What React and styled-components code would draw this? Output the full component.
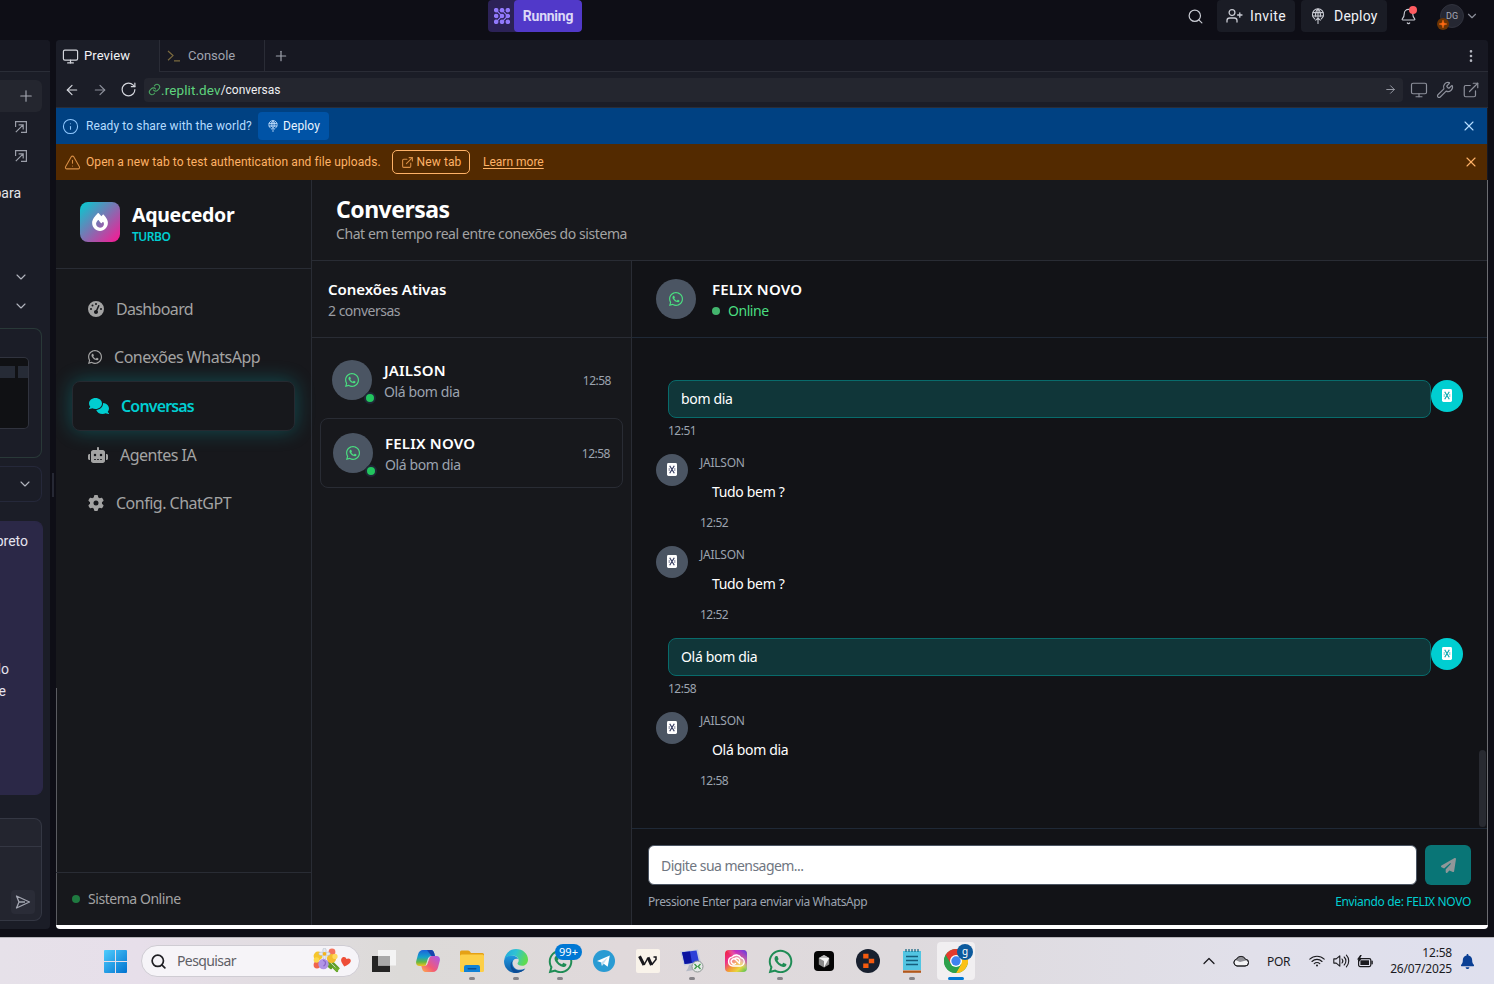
import React from "react";
import styled, { createGlobalStyle, css } from "styled-components";
import {
  Monitor, Plus, ArrowLeft, ArrowRight, RotateCw, Info, TriangleAlert, ExternalLink, X,
  Search, Bell, ChevronDown, ChevronUp, EllipsisVertical, Wrench,
} from "lucide-react";
import { FaComments, FaRobot, FaGear, FaGaugeHigh, FaFire, FaPaperPlane, FaBell } from "react-icons/fa6";
import { FaWhatsapp } from "react-icons/fa";

const segoe = `"Noto Sans", "Open Sans", sans-serif`;
const plex = `Roboto, "Liberation Sans", sans-serif`;

const GlobalStyle = createGlobalStyle`
  * { box-sizing: border-box; }
  body { margin: 0; background: #0e0e16; overflow: hidden; }
  svg { display: block; flex: none; }
`;

const Screen = styled.div`
  width: 1494px;
  height: 984px;
  display: flex;
  flex-direction: column;
  background: #0e0e16;
  overflow: hidden;
  font-family: ${plex};
`;

const Text = styled.span`
  font-family: ${(p) => (p.$ui ? plex : segoe)};
  font-size: ${(p) => p.$size}px;
  line-height: ${(p) => p.$lh || 20}px;
  font-weight: ${(p) => p.$weight || 400};
  color: ${(p) => p.$color || "#fff"};
  letter-spacing: ${(p) => p.$ls || 0}px;
  white-space: nowrap;
`;

/* top bar */
const TopBar = styled.header`
  height: 40px;
  flex: none;
  display: flex;
  align-items: flex-start;
  padding-left: 488px;
`;
const RunPill = styled.div`
  display: flex;
  width: 94px;
  height: 32px;
  border-radius: 4px;
  overflow: hidden;
  background: #2c2257;
`;
const RunDots = styled.div`
  width: 26px;
  display: flex;
  align-items: center;
  justify-content: center;
  padding-left: 2px;
`;
const RunLabel = styled.div`
  flex: 1;
  display: flex;
  align-items: center;
  justify-content: center;
  background: #5139c9;
  border-radius: 4px;
`;
const TopActions = styled.div`
  margin-left: auto;
  display: flex;
  align-items: center;
  height: 32px;
  padding-right: 15px;
`;
const TopButton = styled.div`
  display: flex;
  align-items: center;
  gap: ${(p) => p.$gap}px;
  width: ${(p) => p.$w}px;
  height: 32px;
  padding-left: ${(p) => p.$pl}px;
  margin-left: ${(p) => p.$ml}px;
  border-radius: 4px;
  background: #1a1c25;
`;
const BellWrap = styled.div`
  position: relative;
  margin-left: 13px;
`;
const BellDot = styled.i`
  position: absolute;
  right: 0;
  top: -2px;
  width: 8px;
  height: 8px;
  border-radius: 50%;
  background: #ff5c61;
`;
const UserBadge = styled.div`
  position: relative;
  width: 24px;
  height: 24px;
  margin: 0 1px 0 23px;
  border-radius: 50%;
  border: 1px solid #30323d;
  background: #252732;
  display: flex;
  align-items: center;
  justify-content: center;
`;
const UserSpark = styled.div`
  position: absolute;
  left: -4px;
  top: 13px;
`;

/* workspace */
const Workspace = styled.div`
  display: flex;
  height: 889px;
  flex: none;
`;
const AgentPane = styled.aside`
  width: 50px;
  display: flex;
  flex-direction: column;
  background: #1b1d27;
  border-radius: 0 4px 4px 0;
  overflow: hidden;
`;
const AgentHead = styled.div`
  height: 32px;
  flex: none;
  background: #171822;
  border-bottom: 1px solid #2a2d37;
`;
const AgentPlus = styled.div`
  width: 42px;
  height: 32px;
  margin-top: 8px;
  flex: none;
  display: flex;
  align-items: center;
  justify-content: flex-end;
  padding-right: 7px;
  border-radius: 0 6px 6px 0;
  background: #24262f;
`;
const AgentRow = styled.div`
  width: ${(p) => p.$w || 42}px;
  height: ${(p) => p.$h}px;
  margin-top: ${(p) => p.$mt || 0}px;
  flex: none;
  display: flex;
  align-items: center;
  justify-content: flex-end;
`;
const AgentCard = styled.div`
  width: ${(p) => p.$w || 42}px;
  height: ${(p) => p.$h}px;
  margin-top: ${(p) => p.$mt}px;
  flex: none;
  border: 1px solid ${(p) => p.$border};
  border-left: 0;
  border-radius: 0 8px 8px 0;
  background: ${(p) => p.$bg || "transparent"};
`;
const Snapshot = styled.div`
  width: 29px;
  height: 72px;
  margin-top: 28px;
  padding-top: 8px;
  display: flex;
  gap: 3px;
  background: #101114;
  border: 1px solid #30333e;
  border-left: 0;
  border-radius: 0 5px 5px 0;
`;
const SnapBlock = styled.div`
  height: 12px;
  width: ${(p) => p.$w}px;
  background: #262b36;
`;
const ComposerTop = styled.div`
  height: 28px;
  border-bottom: 1px solid #343743;
`;
const ComposerSend = styled.div`
  width: 24px;
  height: 24px;
  margin: 43px 0 0 11px;
  border-radius: 4px;
  background: #2a2c37;
  display: flex;
  align-items: center;
  justify-content: center;
`;
const Gutter = styled.div`
  width: 6px;
  display: flex;
  align-items: center;
  justify-content: center;
`;
const Handle = styled.div`
  width: 2px;
  height: 24px;
  background: #262834;
`;
const Pane = styled.main`
  width: 1432px;
  display: flex;
  flex-direction: column;
  border-radius: 4px;
  overflow: hidden;
  background: #171822;
`;
const Tabs = styled.div`
  height: 32px;
  flex: none;
  display: flex;
  background: linear-gradient(#2a2c36, #2a2c36) bottom / 100% 1px no-repeat #171822;
`;
const Tab = styled.div`
  display: flex;
  align-items: center;
  gap: ${(p) => p.$gap}px;
  width: ${(p) => p.$w}px;
  padding-left: ${(p) => p.$pl}px;
  height: ${(p) => (p.$active ? 32 : 31)}px;
  border-right: 1px solid #2a2c36;
  background: ${(p) => (p.$active ? "#1b1d27" : "transparent")};
`;
const TabPlus = styled.div`
  display: flex;
  align-items: center;
  padding-left: 8px;
`;
const TabMenu = styled.div`
  margin-left: auto;
  display: flex;
  align-items: center;
  padding-right: 9px;
`;
const AddressBar = styled.div`
  height: 36px;
  flex: none;
  display: flex;
  align-items: center;
  padding-left: 8px;
  background: #1b1d27;
  border-bottom: 1px solid #2a2d37;
`;
const NavIcons = styled.div`
  display: flex;
  align-items: center;
  gap: 12px;
  width: 80px;
`;
const AddressField = styled.div`
  display: flex;
  align-items: center;
  width: 1259px;
  height: 24px;
  padding: 0 6px 0 4px;
  border-radius: 4px;
  background: #24262f;
`;
const FieldGo = styled.div`
  margin-left: auto;
`;
const AddressTools = styled.div`
  display: flex;
  align-items: center;
  gap: 8px;
  padding-left: 7px;
`;
const Notice = styled.div`
  height: 36px;
  flex: none;
  display: flex;
  align-items: center;
  margin-right: 1px;
  padding: 0 ${(p) => p.$pr}px 0 ${(p) => p.$pl}px;
  background: ${(p) => p.$bg};
`;
const NoticeText = styled(Text)`
  margin-left: ${(p) => p.$ml}px;
  width: ${(p) => p.$w}px;
`;
const NoticeClose = styled.div`
  margin-left: auto;
`;
const DeployButton = styled.div`
  display: flex;
  align-items: center;
  justify-content: center;
  gap: 4px;
  width: 71px;
  height: 28px;
  border-radius: 4px;
  background: #0053a6;
`;
const NewTabButton = styled.div`
  display: flex;
  align-items: center;
  justify-content: center;
  gap: 3px;
  width: 78px;
  height: 24px;
  margin-right: 13px;
  border: 1px solid #ffb267;
  border-radius: 5px;
`;
const LearnMore = styled(Text)`
  text-decoration: underline;
  text-underline-offset: 2px;
`;

/* chat application */
const AppFrame = styled.div`
  height: 745px;
  display: flex;
  background: linear-gradient(#5b5c61, #5b5c61) 0 100% / 1px 237px no-repeat #17181c;
  border-right: 1px solid #6c6d72;
`;
const FrameFoot = styled.div`
  height: 4px;
  background: #fff;
`;
const Sidebar = styled.nav`
  width: 256px;
  display: flex;
  flex-direction: column;
  border-right: 1px solid #292c34;
`;
const Brand = styled.div`
  height: 89px;
  flex: none;
  display: flex;
  align-items: flex-start;
  gap: 12px;
  padding: 22px 0 0 24px;
  border-bottom: 1px solid #292c34;
`;
const BrandLogo = styled.div`
  width: 40px;
  height: 40px;
  border-radius: 8px;
  display: flex;
  align-items: center;
  justify-content: center;
  background: linear-gradient(135deg, #00ced1, #ff1493);
`;
const Stack = styled.div`
  display: flex;
  flex-direction: column;
  flex: ${(p) => (p.$grow ? 1 : "none")};
`;
const NavList = styled.div`
  flex: 1;
  padding: 16px;
`;
const NavItem = styled.div`
  display: flex;
  align-items: center;
  gap: ${(p) => p.$gap || 12}px;
  height: ${(p) => (p.$active ? 50 : 48)}px;
  padding-left: ${(p) => p.$pl || 16}px;
  border-radius: 8px;
  color: ${(p) => (p.$active ? "#00ced1" : "#a3a3a3")};
  ${(p) =>
    p.$active &&
    css`
      border: 1px solid #252a31;
      background: #17181c;
      box-shadow: 0 0 20px rgba(0, 206, 209, 0.3);
    `}
`;
const SideFoot = styled.div`
  height: 53px;
  flex: none;
  display: flex;
  align-items: center;
  gap: 8px;
  padding-left: 16px;
  border-top: 1px solid #292c34;
`;
const Dot = styled.i`
  width: 8px;
  height: 8px;
  border-radius: 50%;
  background: ${(p) => p.$color};
`;
const Content = styled.div`
  flex: 1;
  display: flex;
  flex-direction: column;
`;
const ContentHead = styled.div`
  height: 81px;
  flex: none;
  display: flex;
  flex-direction: column;
  padding: 13px 24px 0;
  border-bottom: 1px solid #292c34;
`;
const Columns = styled.div`
  flex: 1;
  display: flex;
  min-height: 0;
`;
const ListColumn = styled.section`
  width: 320px;
  flex: none;
  border-right: 1px solid #292c34;
`;
const ListHead = styled.div`
  height: 77px;
  display: flex;
  flex-direction: column;
  padding: 16px 16px 0;
  border-bottom: 1px solid #292c34;
`;
const ListBody = styled.div`
  display: flex;
  flex-direction: column;
  gap: 4px;
  padding: 8px;
`;
const Contact = styled.div`
  display: flex;
  align-items: center;
  gap: 12px;
  height: ${(p) => (p.$active ? 70 : 68)}px;
  padding: 0 12px;
  border-radius: 8px;
  border: ${(p) => (p.$active ? "1px solid #292c34" : "0")};
`;
const RoundIcon = styled.div`
  position: relative;
  width: ${(p) => p.$size}px;
  height: ${(p) => p.$size}px;
  flex: none;
  border-radius: 50%;
  background: ${(p) => p.$bg || "#4b5563"};
  color: ${(p) => (p.$bg ? "#0aa7b0" : "#353c60")};
  display: flex;
  align-items: center;
  justify-content: center;
`;
const Presence = styled.i`
  position: absolute;
  right: -4px;
  bottom: -4px;
  width: 12px;
  height: 12px;
  border-radius: 50%;
  border: 2px solid #1f2937;
  background: #22c55e;
`;
const ChatColumn = styled.section`
  flex: 1;
  display: flex;
  flex-direction: column;
  background: #121317;
`;
const ChatHead = styled.div`
  height: 77px;
  flex: none;
  display: flex;
  align-items: center;
  gap: 16px;
  padding-left: 24px;
  border-bottom: 1px solid #1f2937;
`;
const OnlineLine = styled.div`
  display: flex;
  align-items: center;
  gap: 8px;
`;
const ScrollArea = styled.div`
  flex: 1;
  display: flex;
  padding-right: 1px;
`;
const Messages = styled.div`
  flex: 1;
  display: flex;
  flex-direction: column;
  gap: 16px;
  padding: 42px 16px 0 24px;
`;
const ScrollThumb = styled.div`
  width: 7px;
  height: 77px;
  align-self: flex-end;
  margin-bottom: 1px;
  border-radius: 4px;
  background: #282a31;
`;
const MessageRow = styled.div`
  display: flex;
  gap: ${(p) => (p.$own ? 0 : 12)}px;
  padding-left: ${(p) => (p.$own ? 12 : 0)}px;
  height: ${(p) => (p.$own ? 58 : 76)}px;
`;
const Bubble = styled.div`
  height: 38px;
  flex: none;
  display: flex;
  align-items: center;
  padding-left: 12px;
  margin: ${(p) => (p.$own ? "0 0 5px" : "2px 0 4px")};
  border-radius: 8px;
  border: ${(p) => (p.$own ? "1px solid #086b6b" : "0")};
  background: ${(p) => (p.$own ? "#103639" : "transparent")};
`;
const Sender = styled(Text)`
  padding-top: 1px;
`;
const ContactTime = styled(Text)`
  padding-top: 2px;
`;
const Composer = styled.div`
  height: 97px;
  flex: none;
  display: flex;
  flex-direction: column;
  gap: 7px;
  padding: 16px 16px 0;
  border-top: 1px solid #1f2937;
`;
const ComposerRow = styled.div`
  display: flex;
  justify-content: space-between;
  align-items: center;
`;
const MessageInput = styled.div`
  width: 769px;
  height: 40px;
  display: flex;
  align-items: center;
  padding: 2px 0 0 12px;
  border: 1px solid #4b5563;
  border-radius: 6px;
  background: #fff;
`;
const SendButton = styled.div`
  width: 46px;
  height: 40px;
  display: flex;
  align-items: center;
  justify-content: center;
  border-radius: 6px;
  background: #097576;
`;

/* desktop taskbar */
const Taskbar = styled.footer`
  height: 47px;
  margin-top: 8px;
  flex: none;
  display: flex;
  align-items: center;
  padding-left: 104px;
  border-top: 1px solid #b5b3b9;
  background: linear-gradient(90deg, #e6e1e9 0, #e7dfea 140px, #dcdad8 400px, #e0d9db 620px, #dedadd 900px, #e1e0ea 1250px, #dfe0ee 100%);
`;
const SearchPill = styled.div`
  display: flex;
  align-items: center;
  gap: 10px;
  width: 219px;
  height: 32px;
  margin: 0 2px 0 14px;
  padding: 0 6px 0 8px;
  border-radius: 16px;
  border: 1px solid #cfccd3;
  background: #f6f4f8;
`;
const PillArt = styled.div`
  margin-left: auto;
`;
const TaskItem = styled.div`
  position: relative;
  width: 38px;
  height: 38px;
  margin: 0 3px;
  display: flex;
  align-items: center;
  justify-content: center;
  border-radius: 4px;
  background: ${(p) => (p.$open ? "#f1eff1" : "transparent")};
`;
const TaskMark = styled.i`
  position: absolute;
  bottom: 0;
  left: ${(p) => (p.$wide ? 11 : 16)}px;
  width: ${(p) => (p.$wide ? 16 : 6)}px;
  height: 3px;
  border-radius: 2px;
  background: ${(p) => (p.$wide ? "#0078d4" : "#858388")};
`;
const TaskBadge = styled.span`
  position: absolute;
  top: 2px;
  left: ${(p) => (p.$round ? 20 : 14)}px;
  width: ${(p) => (p.$round ? 16 : 27)}px;
  height: 16px;
  border-radius: 8px;
  background: ${(p) => (p.$round ? "#0c5a9d" : "#0078d4")};
  color: #fff;
  font: ${(p) => (p.$round ? 10 : 11)}px/15px ${segoe};
  text-align: center;
`;
const Tray = styled.div`
  margin-left: auto;
  display: flex;
  align-items: center;
  padding-right: 19px;
`;
const TrayItem = styled.div`
  margin-right: ${(p) => p.$mr}px;
`;
const Clock = styled.div`
  display: flex;
  flex-direction: column;
  align-items: flex-end;
  margin-right: 8px;
`;

const DeployGlyph = ({ size, color, sw = 1.1 }) => (
  <svg width={size} height={size} viewBox="0 0 16 16" fill="none" stroke={color} strokeWidth={sw} strokeLinecap="round">
    <path d="M4.600 10.800A5.600 5.600 0 1 1 11.400 10.800" />
    <path d="M5.800 8.800C4.900 5.500 6.200 2 8 1.100C9.800 2 11.100 5.500 10.200 8.800M3 4.600h10M2.800 8h10.400M8 1.200v14.200M5.700 12.200L8 10l2.300 2.200" />
  </svg>
);
const InviteGlyph = () => (
  <svg width="17" height="16" viewBox="0 0 17 16" fill="none" stroke="#c8cad2" strokeWidth="1.3" strokeLinecap="round">
    <circle cx="6" cy="4.6" r="2.9" />
    <path d="M1 14v-1.4c0-1.6 1.2-2.6 2.7-2.6h4.6c1.5 0 2.7 1 2.7 2.6V14M13.8 4.8v4.4M11.6 7h4.4" />
  </svg>
);
const RunGlyph = () => (
  <svg width="16" height="16" viewBox="0 0 16 16" fill="#9179fb" stroke="#9179fb">
    {[2.2, 8, 13.8].map((x) => [2.2, 8, 13.8].map((y) => <circle key={`${x}-${y}`} cx={x} cy={y} r="2.3" stroke="none" />))}
    <path d="M2.2 2.2L8 8L2.2 13.8M8 2.2L13.8 8L8 13.8" fill="none" strokeWidth="1.1" />
  </svg>
);
const ConsoleGlyph = () => (
  <svg width="14" height="12" viewBox="0 0 14 12" fill="none" stroke="#7b6a3f" strokeWidth="1.2">
    <path d="M1 1l5 4.6-5 4.6M7 10.8h6" />
  </svg>
);
const JumpGlyph = () => (
  <svg width="12" height="12" viewBox="0 0 12 12" fill="none" stroke="#9b9ea9" strokeWidth="1.2">
    <path d="M.6 4V.6h10.800v10.800H8M.8 11.200L7.800 4.200M3.600 3.800h4.600v4.800" />
    <path d="M.6 6V4M6 11.400h2" />
  </svg>
);
const SparkGlyph = () => (
  <svg width="12" height="12" viewBox="0 0 12 12">
    <circle cx="6" cy="6" r="6" fill="#6b3404" />
    <path d="M6 2l.9 3.1L10 6l-3.1.9L6 10l-.9-3.1L2 6l3.1-.9z" fill="#ff6a13" stroke="#ff6a13" strokeWidth=".5" />
  </svg>
);
const MissingGlyph = () => (
  <svg width="10" height="14" viewBox="0 0 10 14">
    <rect width="10" height="13" rx="1.400" fill="#fff" />
    <path d="M2.700 2.800L7.300 10.200M7.300 2.800L2.700 10.200" stroke="currentColor" strokeWidth="1.200" />
    <path d="M2.200 5v3M7.800 5v3" stroke="currentColor" strokeWidth=".6" />
  </svg>
);
const SendOutline = () => (
  <svg width="16" height="14" viewBox="0 0 16 14" fill="none" stroke="#a3a6b1" strokeWidth="1.3" strokeLinejoin="round">
    <path d="M1.5 1L14.5 7L1.5 13L4 7zM4 7h6" />
  </svg>
);

const WindowsLogo = () => (
  <svg width="23" height="23" viewBox="0 0 23 23">
    <defs>
      <linearGradient id="win" x1="0" y1="0" x2="1" y2="1">
        <stop offset="0" stopColor="#4fcdfd" />
        <stop offset="1" stopColor="#0072cf" />
      </linearGradient>
    </defs>
    <path fill="url(#win)" d="M0 1q0-1 1-1h10v11H0zM12 0h10q1 0 1 1v10H12zM0 12h11v11H1q-1 0-1-1zM12 12h11v10q0 1-1 1H12z" />
  </svg>
);
const Bouquet = () => (
  <svg width="40" height="26" viewBox="0 0 40 26">
    <path d="M15 14l9 9M17 12l8 8M13 16l5 4" stroke="#5e9c25" strokeWidth="2.4" strokeLinecap="round" />
    <path d="M19 19l8 1-3 4z" fill="#6ead2c" />
    <circle cx="19" cy="4" r="3.4" fill="#f4735d" />
    <circle cx="4" cy="17" r="3.4" fill="#f0654d" />
    <circle cx="5" cy="8" r="4.4" fill="#f6c52c" />
    <circle cx="3.5" cy="12" r="2.8" fill="#fbd84c" />
    <circle cx="18.5" cy="10.5" r="4.6" fill="#f5bc2d" />
    <circle cx="22" cy="8.4" r="2.6" fill="#ffd95d" />
    <g fill="#e5e9f0" stroke="#a9b0bf" strokeWidth=".5">
      <ellipse cx="11.5" cy="2.6" rx="1.7" ry="2.5" /><ellipse cx="11.5" cy="9" rx="1.7" ry="2.5" />
      <ellipse cx="8.2" cy="5.8" rx="2.5" ry="1.7" /><ellipse cx="14.8" cy="5.8" rx="2.5" ry="1.7" />
    </g>
    <circle cx="11.5" cy="5.8" r="1.9" fill="#f2b21f" />
    <circle cx="10.5" cy="16" r="5.2" fill="#b194e6" />
    <path d="M10 12.5c3 0 3.5 4 .5 5.6" fill="none" stroke="#8765c8" strokeWidth="1.2" />
    <path d="M28.5 10.6c1.8-2.6 4.6-1.5 4.9.5 2-1.7 5-.2 4.3 2.4-.6 2.4-3.3 3.4-6.4 5-1.6-2.6-4.2-5.4-2.8-7.9z" fill="#ee4d37" />
  </svg>
);
const TaskViewIcon = () => (
  <svg width="24" height="24" viewBox="0 0 24 24">
    <rect x="0" y="7" width="18" height="16" fill="#242424" />
    <rect x="6" y="1" width="18" height="15.5" fill="#f4f4f4" />
    <rect x="6" y="7" width="12" height="9.5" fill="#a9a9a9" />
  </svg>
);
const CopilotIcon = () => (
  <svg width="24" height="22" viewBox="0 0 24 22">
    <defs>
      <linearGradient id="cpa" x1="0" y1="0" x2="0" y2="1">
        <stop offset="0" stopColor="#1b62dc" /><stop offset=".45" stopColor="#15a3c9" /><stop offset=".75" stopColor="#67b83f" /><stop offset="1" stopColor="#f4c020" />
      </linearGradient>
      <linearGradient id="cpb" x1="0" y1="1" x2="1" y2="0">
        <stop offset="0" stopColor="#ffb14a" /><stop offset=".4" stopColor="#f25a77" /><stop offset="1" stopColor="#a958ee" />
      </linearGradient>
    </defs>
    <path d="M7 0h8c2 0 2.6 1.4 3.2 3.2L19 6h-3.5c-1.600 0-2.300.8-2.800 2.300L11 13.500c-.5 1.700-1.500 2.500-3 2.500H3.500C.8 16-.3 14 .2 11.200L2 4.500C2.800 1.600 4.500 0 7 0z" fill="url(#cpa)" />
    <path d="M17 22H9.500c-2 0-2.800-1.400-3.300-3l-.9-3H8.500c1.600 0 2.600-.9 3.100-2.500l1.700-5.200C13.800 6.800 14.700 6 16 6h4.500c2.700 0 3.800 2 3.300 4.700L22 17.500c-.8 2.900-2.500 4.500-5 4.500z" fill="url(#cpb)" />
    <path d="M11 0h4c2 0 2.600 1.400 3.200 3.200L19 6h-3.500L11 0z" fill="#1743ac" />
    <path d="M13.300 7.500L10.800 14.600L9.600 15.800L12.200 7.700z" fill="#e6e2e6" />
  </svg>
);
const FolderIcon = () => (
  <svg width="24" height="22" viewBox="0 0 24 22">
    <path d="M0 2q0-1.500 1.500-1.500H8q1 0 1.700.8L11 3H22.500Q24 3 24 4.500V8H0z" fill="#e5a115" />
    <rect y="4.500" width="24" height="17.500" rx="1.500" fill="#fdcf47" />
    <path d="M4 22v-5q0-2 2-2h12q2 0 2 2v5z" fill="#1182d6" />
    <rect x="7.500" y="18" width="9" height="1.600" rx=".8" fill="#0b4f93" />
  </svg>
);
const EdgeIcon = () => (
  <svg width="24" height="24" viewBox="0 0 24 24">
    <defs>
      <linearGradient id="eda" x1="0" y1="0" x2="1" y2=".3">
        <stop offset="0" stopColor="#1fa6dd" /><stop offset=".5" stopColor="#2fc2d4" /><stop offset="1" stopColor="#5edb52" />
      </linearGradient>
      <linearGradient id="edb" x1="0" y1="0" x2="0" y2="1">
        <stop offset="0" stopColor="#2098e0" /><stop offset="1" stopColor="#0c59a4" />
      </linearGradient>
    </defs>
    <path d="M.3 10.500C1.200 4.500 6 0 12 0c7 0 12 5 12 10.500 0 4-2.800 6.300-6 6.300-3 0-4.500-1.300-4.500-2.300 0-.8 1.200-1.200 1.200-3.200 0-2.600-2.500-4.600-5.700-4.600-4.500 0-8 2-8.700 3.800z" fill="url(#eda)" />
    <path d="M.1 11.500C.5 8.500 4 6.600 8.500 6.700c3 0 5 1.500 5.800 3.200-5.500-1.200-7.300 4-4.500 8 2.200 3.200 6.800 3.800 11.500 1.700C19 22.500 15.500 24 12 24 5 24-.5 18.500.1 11.500z" fill="url(#edb)" />
    <path d="M9 11.500c-2.200 2.500-1.500 7.500 3 9.500 3 1.300 6.500.7 9.300-1.400C19 22.500 15.500 24 12 24 6.500 23 4.500 14 9 11.500z" fill="#0d4b94" />
  </svg>
);
const TelegramIcon = () => (
  <svg width="22" height="22" viewBox="0 0 22 22">
    <circle cx="11" cy="11" r="11" fill="#2a9bd3" />
    <path d="M4 11L16.800 5.500L14.700 16.700L10.700 13.800L8.900 15.800L8.300 12.600z" fill="#fff" />
    <path d="M8.300 12.600l6.300-5.100-3.900 6.300-1.800 2z" fill="#c3dff0" />
  </svg>
);
const WispIcon = () => (
  <svg width="24" height="24" viewBox="0 0 24 24">
    <rect width="24" height="24" rx="2" fill="#f9f3ea" />
    <path d="M3.500 7.200L8 16M12 8.500L15.500 16" stroke="#17171c" strokeWidth="3" />
    <path d="M8 16L12.200 8.500M15.500 16L20 10.500V7.200M17.500 8h3" fill="none" stroke="#17171c" strokeWidth="1.500" />
  </svg>
);
const RemoteIcon = () => (
  <svg width="24" height="24" viewBox="0 0 24 24">
    <path d="M0 2.500L18 .5 21 14 4 16.500z" fill="#c3ccdd" />
    <path d="M2 3.300L16.500 1.600 19 13 4.700 15z" fill="#2b40d8" />
    <path d="M2 3.300L10 2.400 12 14 4.700 15z" fill="#0a14a0" />
    <path d="M9 16l5-.7 1 3 1 2.500-10 1.500 2-3z" fill="#b4b9c6" />
    <circle cx="17.500" cy="17.500" r="5.500" fill="#e6eae8" stroke="#8d9693" />
    <path d="M14.500 15l2.300 2.500-2.300 2.500M20.500 15l-2.300 2.500 2.300 2.500" fill="none" stroke="#3d9a49" strokeWidth="1.300" />
  </svg>
);
const CloudIcon = () => (
  <svg width="22" height="22" viewBox="0 0 22 22">
    <defs>
      <linearGradient id="cca" x1="0" y1="0" x2="1" y2="1">
        <stop offset="0" stopColor="#f12535" /><stop offset=".3" stopColor="#ec2f8b" /><stop offset=".55" stopColor="#f39c33" /><stop offset=".75" stopColor="#e9d53d" /><stop offset="1" stopColor="#3fc05b" />
      </linearGradient>
      <linearGradient id="ccb" x1="1" y1="0" x2="0" y2="1">
        <stop offset="0" stopColor="#4c3cf0" /><stop offset=".3" stopColor="#b32ce0" stopOpacity=".6" /><stop offset=".5" stopColor="#fff" stopOpacity="0" />
      </linearGradient>
    </defs>
    <rect width="22" height="22" rx="4" fill="url(#cca)" />
    <rect width="22" height="22" rx="4" fill="url(#ccb)" />
    <path d="M14 16H7.800a4.600 4.600 0 0 1-.5-9.100A5.200 5.200 0 0 1 16 7.800a4.200 4.200 0 0 1-2 8.200z" fill="#fff" fillOpacity=".25" stroke="#fff" strokeWidth="1.400" />
    <path d="M10.500 13.500a2.600 2.600 0 1 1 0-4l4 4M9.500 9a3 3 0 1 1 4.500 4" fill="none" stroke="#fff" strokeWidth="1.300" strokeLinecap="round" />
  </svg>
);
const CubeIcon = () => (
  <svg width="20" height="20" viewBox="0 0 20 20">
    <rect width="20" height="20" rx="4" fill="#050505" />
    <path d="M10 4l5.200 3v6.500L10 16.500l-5.200-3V7z" fill="#8c8c8c" />
    <path d="M4.800 7h10.400L10 16.500V10z" fill="#f4f4f4" />
    <path d="M10 4l5.200 3H4.800z" fill="#bdbdbd" />
  </svg>
);
const ReplitIcon = () => (
  <svg width="24" height="24" viewBox="0 0 24 24">
    <circle cx="12" cy="12" r="12" fill="#18202f" />
    <path d="M7.200 4.800h5.300v4.600H7.200zM12.800 9.700h5.400v4.600h-5.400zM7.200 14.500h5.300v4.600H7.200z" fill="#f65a0e" />
  </svg>
);
const NotepadIcon = () => (
  <svg width="18" height="24" viewBox="0 0 18 24">
    <rect y="2" width="18" height="19" fill="#52c5e2" />
    <path d="M3 0v3M6 0v3M9 0v3M12 0v3M15 0v3" stroke="#1d6b86" strokeWidth="1.300" />
    <path d="M3 7.500h12M3 11.500h12M3 15.500h12" stroke="#155d7b" strokeWidth="1.500" />
    <rect y="21.500" width="18" height="2.300" fill="#b1581b" />
  </svg>
);
const ChromeIcon = () => (
  <svg width="24" height="24" viewBox="0 0 24 24">
    <circle cx="12" cy="12" r="12" fill="#2da14c" />
    <path d="M12 12L1.600 6A12 12 0 0 1 22.400 6L12 6z" fill="#e33b2e" />
    <path d="M22.400 6A12 12 0 0 1 12 24l5.200-9L12 6z" fill="#fbc116" />
    <path d="M1.600 6l5.200 9L12 12 11 6z" fill="#e33b2e" />
    <path d="M1.600 6A12 12 0 0 0 12 24l5.200-9H6.800z" fill="#2da14c" />
    <circle cx="12" cy="12" r="6" fill="#fff" />
    <circle cx="12" cy="12" r="4.700" fill="#3f83ef" />
  </svg>
);
const WeatherIcon = () => (
  <svg width="16" height="12" viewBox="0 0 16 12">
    <path d="M4 11a3.500 3.500 0 0 1-.3-6.900A4.700 4.700 0 0 1 12.300 4.200a3.400 3.400 0 0 1-.3 6.800z" fill="#f4f4f6" stroke="#232327" strokeWidth="1" />
    <path d="M3.700 4.100A4.700 4.700 0 0 1 12.300 4.200L14 5.200L7 7L2.500 5z" fill="#8e8e94" />
    <path d="M4 11a3.500 3.500 0 0 1-.3-6.900A4.700 4.700 0 0 1 12.300 4.200a3.400 3.400 0 0 1-.3 6.800z" fill="none" stroke="#232327" strokeWidth="1" />
  </svg>
);
const WifiIcon = () => (
  <svg width="16" height="12" viewBox="0 0 16 12" fill="none" stroke="#1b1b1f" strokeWidth="1.100" strokeLinecap="round">
    <path d="M.8 4.200a10.200 10.200 0 0 1 14.400 0M3 6.500a7 7 0 0 1 10 0M5.200 8.700a4 4 0 0 1 5.600 0" />
    <circle cx="8" cy="10.600" r="1" fill="#1b1b1f" stroke="none" />
  </svg>
);
const VolumeIcon = () => (
  <svg width="17" height="14" viewBox="0 0 17 14" fill="none" stroke="#1b1b1f" strokeWidth="1.100" strokeLinecap="round" strokeLinejoin="round">
    <path d="M.8 4.900h2.400L6.800 1.800v10.400L3.200 9.100H.8zM9 5a3 3 0 0 1 0 4M11.200 3a5.600 5.600 0 0 1 0 8M13.400 1.200a8.400 8.400 0 0 1 0 11.600" />
  </svg>
);
const BatteryIcon = () => (
  <svg width="16" height="13" viewBox="0 0 16 13">
    <rect x="1.600" y="3.600" width="12.200" height="8" rx="1.500" fill="none" stroke="#1b1b1f" strokeWidth="1.200" />
    <rect x="3.400" y="5.300" width="8.600" height="4.700" fill="#1b1b1f" />
    <rect x="14.400" y="5.700" width="1.400" height="3.600" fill="#1b1b1f" />
    <path d="M3.200 0L0 4.600h2L1.400 7.500 5 3.300H3.200L4.800 0z" fill="#1b1b1f" />
  </svg>
);

const tasks = [
  { icon: <TaskViewIcon /> },
  { icon: <CopilotIcon /> },
  { icon: <FolderIcon />, mark: true },
  { icon: <EdgeIcon />, mark: true },
  { icon: <FaWhatsapp size={27} color="#1f8c55" />, mark: true, badge: "99+" },
  { icon: <TelegramIcon /> },
  { icon: <WispIcon /> },
  { icon: <RemoteIcon />, mark: true },
  { icon: <CloudIcon /> },
  { icon: <FaWhatsapp size={27} color="#1f8c55" />, mark: true },
  { icon: <CubeIcon /> },
  { icon: <ReplitIcon /> },
  { icon: <NotepadIcon />, mark: true },
  { icon: <ChromeIcon />, open: true, badge: "g" },
];

const navItems = [
  { icon: <FaGaugeHigh size={16} />, label: "Dashboard", ls: -0.65 },
  { icon: <FaWhatsapp size={16} />, label: "Conexões WhatsApp", gap: 11, pl: 15, ls: -0.47 },
  { icon: <FaComments size={20} />, label: "Conversas", active: true, ls: -0.85 },
  { icon: <FaRobot size={20} />, label: "Agentes IA", ls: -0.5 },
  { icon: <FaGear size={16} />, label: "Config. ChatGPT", ls: -0.5 },
];

const contacts = [
  { name: "JAILSON", last: "Olá bom dia", time: "12:58" },
  { name: "FELIX NOVO", last: "Olá bom dia", time: "12:58", active: true },
];

const messages = [
  { own: true, text: "bom dia", time: "12:51" },
  { from: "JAILSON", text: "Tudo bem ?", time: "12:52" },
  { from: "JAILSON", text: "Tudo bem ?", time: "12:52" },
  { own: true, text: "Olá bom dia", time: "12:58" },
  { from: "JAILSON", text: "Olá bom dia", time: "12:58" },
];

function Message({ own, from, text, time }) {
  const avatar = (
    <RoundIcon $size={32} $bg={own ? "#00ced1" : undefined}>
      <MissingGlyph />
    </RoundIcon>
  );
  return (
    <MessageRow $own={own}>
      {!own && avatar}
      <Stack $grow>
        {from && <Sender $size={12} $lh={16} $color="#9ca3af" $ls={-0.25}>{from}</Sender>}
        <Bubble $own={own}><Text $size={14} $ls={-0.33}>{text}</Text></Bubble>
        <Text $size={12} $lh={16} $color="#9ca3af" $ls={-0.5}>{time}</Text>
      </Stack>
      {own && avatar}
    </MessageRow>
  );
}

export default function App() {
  return (
    <Screen>
      <GlobalStyle />
      <TopBar>
        <RunPill>
          <RunDots><RunGlyph /></RunDots>
          <RunLabel><Text $ui $size={14} $weight={700} $ls={-0.25} $color="#dcd8f7">Running</Text></RunLabel>
        </RunPill>
        <TopActions>
          <Search size={17} color="#c8cad2" strokeWidth={1.7} />
          <TopButton $w={78} $gap={7} $pl={9} $ml={13}>
            <InviteGlyph /><Text $ui $size={14} $color="#f0f1f5" $ls={0.4}>Invite</Text>
          </TopButton>
          <TopButton $w={86} $gap={8} $pl={9} $ml={6}>
            <DeployGlyph size={16} color="#c8cad2" /><Text $ui $size={14} $color="#f0f1f5" $ls={0.2}>Deploy</Text>
          </TopButton>
          <BellWrap><Bell size={17} color="#c8cad2" strokeWidth={1.6} /><BellDot /></BellWrap>
          <UserBadge>
            <Text $ui $size={9} $color="#a5a8b5">DG</Text>
            <UserSpark><SparkGlyph /></UserSpark>
          </UserBadge>
          <ChevronDown size={14} color="#8b8e99" />
        </TopActions>
      </TopBar>

      <Workspace>
        <AgentPane>
          <AgentHead />
          <AgentPlus><Plus size={18} color="#a7aab4" strokeWidth={1.5} /></AgentPlus>
          <AgentRow $w={27} $h={30}><JumpGlyph /></AgentRow>
          <AgentRow $w={27} $h={28}><JumpGlyph /></AgentRow>
          <AgentRow $w={21} $h={20} $mt={13}><Text $ui $size={14} $color="#e4e5ea">para</Text></AgentRow>
          <AgentRow $w={29} $h={20} $mt={64}><ChevronDown size={16} color="#b3b6bf" strokeWidth={1.7} /></AgentRow>
          <AgentRow $w={29} $h={20} $mt={9}><ChevronDown size={16} color="#b3b6bf" strokeWidth={1.7} /></AgentRow>
          <AgentCard $h={130} $mt={12} $border="#293938">
            <Snapshot><SnapBlock $w={15} /><SnapBlock $w={10} /></Snapshot>
          </AgentCard>
          <AgentCard $h={36} $mt={8} $border="#25283a">
            <AgentRow $w={33} $h={34}><ChevronDown size={16} color="#b3b6bf" strokeWidth={1.7} /></AgentRow>
          </AgentCard>
          <AgentCard $w={43} $h={274} $mt={19} $border="#2b2847" $bg="#2b2847">
            <AgentRow $w={28} $h={20} $mt={9}><Text $ui $size={14} $color="#e4e3ee">preto</Text></AgentRow>
            <AgentRow $w={9} $h={22} $mt={107}><Text $ui $size={14} $color="#e4e3ee">do</Text></AgentRow>
            <AgentRow $w={6} $h={22}><Text $ui $size={14} $color="#e4e3ee">e</Text></AgentRow>
          </AgentCard>
          <AgentCard $h={103} $mt={23} $border="#343743" $bg="#23252f">
            <ComposerTop />
            <ComposerSend><SendOutline /></ComposerSend>
          </AgentCard>
        </AgentPane>
        <Gutter><Handle /></Gutter>

        <Pane>
          <Tabs>
            <Tab $w={104} $pl={6} $gap={5} $active>
              <Monitor size={17} color="#d3d5dc" strokeWidth={1.7} />
              <Text $ui $size={13} $color="#f2f3f6" $ls={0.1}>Preview</Text>
            </Tab>
            <Tab $w={105} $pl={7} $gap={7}>
              <ConsoleGlyph /><Text $ui $size={13} $color="#a0a3ae">Console</Text>
            </Tab>
            <TabPlus><Plus size={16} color="#a0a3ae" strokeWidth={1.8} /></TabPlus>
            <TabMenu><EllipsisVertical size={16} color="#b4b6bf" /></TabMenu>
          </Tabs>
          <AddressBar>
            <NavIcons>
              <ArrowLeft size={16} color="#d3d5dc" strokeWidth={1.8} />
              <ArrowRight size={16} color="#8d909b" strokeWidth={1.8} />
              <RotateCw size={17} color="#d3d5dc" strokeWidth={1.7} />
            </NavIcons>
            <AddressField>
              <svg width="13" height="13" viewBox="0 0 24 24" fill="none" stroke="#4aa862" strokeWidth="2" strokeLinecap="round">
                <path d="M10 13a5 5 0 0 0 7.500.5l3-3a5 5 0 0 0-7-7l-1.700 1.700M14 11a5 5 0 0 0-7.500-.5l-3 3a5 5 0 0 0 7 7l1.700-1.700" />
              </svg>
              <Text $ui $size={13.5} $color="#5fd37e" $ls={0.1}>.replit.dev</Text>
              <Text $ui $size={12} $color="#eff0f3">/conversas</Text>
              <FieldGo><ArrowRight size={13} color="#989ba6" strokeWidth={1.8} /></FieldGo>
            </AddressField>
            <AddressTools>
              <Monitor size={18} color="#8d909b" strokeWidth={1.6} />
              <Wrench size={18} color="#8d909b" strokeWidth={1.6} />
              <ExternalLink size={18} color="#8d909b" strokeWidth={1.6} />
            </AddressTools>
          </AddressBar>
          <Notice $bg="#004182" $pl={6} $pr={10}>
            <Info size={17} color="#8fc8ff" strokeWidth={1.5} />
            <NoticeText $ui $size={12} $ml={7} $w={172} $color="#b5dcff" $ls={0.11}>Ready to share with the world?</NoticeText>
            <DeployButton>
              <DeployGlyph size={12} color="#c8e2ff" /><Text $ui $size={12} $color="#eaf4ff" $ls={0.1}>Deploy</Text>
            </DeployButton>
            <NoticeClose><X size={16} color="#b5dcff" strokeWidth={1.6} /></NoticeClose>
          </Notice>
          <Notice $bg="#532a00" $pl={8} $pr={8}>
            <TriangleAlert size={17} color="#d98f45" strokeWidth={1.5} />
            <NoticeText $ui $size={12} $ml={5} $w={306} $color="#ffb267" $ls={0.08}>Open a new tab to test authentication and file uploads.</NoticeText>
            <NewTabButton>
              <ExternalLink size={13} color="#d98f45" /><Text $ui $size={12} $color="#ffb267" $ls={0.1}>New tab</Text>
            </NewTabButton>
            <LearnMore $ui $size={12} $color="#ffb267">Learn more</LearnMore>
            <NoticeClose><X size={16} color="#ffb267" strokeWidth={1.6} /></NoticeClose>
          </Notice>

          <AppFrame>
            <Sidebar>
              <Brand>
                <BrandLogo><FaFire size={18} color="#fff" /></BrandLogo>
                <Stack>
                  <Text $size={19.500} $lh={26} $weight={700} $ls={-0.3}>Aquecedor</Text>
                  <Text $size={12} $lh={18} $weight={600} $color="#00ced1" $ls={-0.5}>TURBO</Text>
                </Stack>
              </Brand>
              <NavList>
                {navItems.map((n) => (
                  <NavItem key={n.label} $active={n.active} $gap={n.gap} $pl={n.pl}>
                    {n.icon}
                    <Text $size={16} $lh={24} $weight={n.active ? 600 : 400} $color="inherit" $ls={n.ls}>{n.label}</Text>
                  </NavItem>
                ))}
              </NavList>
              <SideFoot>
                <Dot $color="#1f7a40" /><Text $size={14} $color="#a3a3a3" $ls={-0.45}>Sistema Online</Text>
              </SideFoot>
            </Sidebar>

            <Content>
              <ContentHead>
                <Text $size={23} $lh={32} $weight={700} $ls={-0.5}>Conversas</Text>
                <Text $size={14} $lh={18} $color="#a3a3a3" $ls={-0.42}>Chat em tempo real entre conexões do sistema</Text>
              </ContentHead>
              <Columns>
                <ListColumn>
                  <ListHead>
                    <Text $size={15} $lh={24} $weight={600} $ls={-0.05}>Conexões Ativas</Text>
                    <Text $size={14} $lh={20} $color="#9b9da3" $ls={-0.5}>2 conversas</Text>
                  </ListHead>
                  <ListBody>
                    {contacts.map((c) => (
                      <Contact key={c.name} $active={c.active}>
                        <RoundIcon $size={40}>
                          <FaWhatsapp size={16} color="#4ade80" />
                          <Presence />
                        </RoundIcon>
                        <Stack $grow>
                          <Text $size={15} $lh={24} $weight={600} $ls={0.2}>{c.name}</Text>
                          <Text $size={14} $color="#9ca3af" $ls={-0.38}>{c.last}</Text>
                        </Stack>
                        <ContactTime $size={12} $color="#9ca3af" $ls={-0.5}>{c.time}</ContactTime>
                      </Contact>
                    ))}
                  </ListBody>
                </ListColumn>

                <ChatColumn>
                  <ChatHead>
                    <RoundIcon $size={40}><FaWhatsapp size={16} color="#4ade80" /></RoundIcon>
                    <Stack>
                      <Text $size={15} $lh={24} $weight={600} $ls={0.2}>FELIX NOVO</Text>
                      <OnlineLine><Dot $color="#43b56d" /><Text $size={14} $color="#4ade80" $ls={-0.45}>Online</Text></OnlineLine>
                    </Stack>
                  </ChatHead>
                  <ScrollArea>
                    <Messages>
                      {messages.map((m, i) => <Message key={i} {...m} />)}
                    </Messages>
                    <ScrollThumb />
                  </ScrollArea>
                  <Composer>
                    <ComposerRow>
                      <MessageInput><Text $size={14} $color="#6f7681" $ls={-0.55}>Digite sua mensagem...</Text></MessageInput>
                      <SendButton><FaPaperPlane size={15} color="#8f9799" /></SendButton>
                    </ComposerRow>
                    <ComposerRow>
                      <Text $size={12} $color="#9ca3af" $ls={-0.39}>Pressione Enter para enviar via WhatsApp</Text>
                      <Text $size={12} $color="#00ced1" $ls={-0.35}>Enviando de: FELIX NOVO</Text>
                    </ComposerRow>
                  </Composer>
                </ChatColumn>
              </Columns>
            </Content>
          </AppFrame>
          <FrameFoot />
        </Pane>
      </Workspace>

      <Taskbar>
        <WindowsLogo />
        <SearchPill>
          <Search size={17} color="#1f1f23" strokeWidth={2.4} />
          <Text $size={14} $color="#5f5f66" $ls={-0.6}>Pesquisar</Text>
          <PillArt><Bouquet /></PillArt>
        </SearchPill>
        {tasks.map((t, i) => (
          <TaskItem key={i} $open={t.open}>
            {t.icon}
            {(t.mark || t.open) && <TaskMark $wide={t.open} />}
            {t.badge && <TaskBadge $round={t.open}>{t.badge}</TaskBadge>}
          </TaskItem>
        ))}
        <Tray>
          <TrayItem $mr={14}><ChevronUp size={20} color="#1b1b1f" strokeWidth={1.5} /></TrayItem>
          <TrayItem $mr={18}><WeatherIcon /></TrayItem>
          <TrayItem $mr={19}><Text $size={12} $color="#1b1b1f" $ls={-0.3}>POR</Text></TrayItem>
          <TrayItem $mr={8}><WifiIcon /></TrayItem>
          <TrayItem $mr={7}><VolumeIcon /></TrayItem>
          <TrayItem $mr={17}><BatteryIcon /></TrayItem>
          <Clock>
            <Text $size={12} $lh={16} $color="#1b1b1f" $ls={-0.2}>12:58</Text>
            <Text $size={12} $lh={16} $color="#1b1b1f" $ls={-0.2}>26/07/2025</Text>
          </Clock>
          <FaBell size={15} color="#0a3f94" />
        </Tray>
      </Taskbar>
    </Screen>
  );
}
